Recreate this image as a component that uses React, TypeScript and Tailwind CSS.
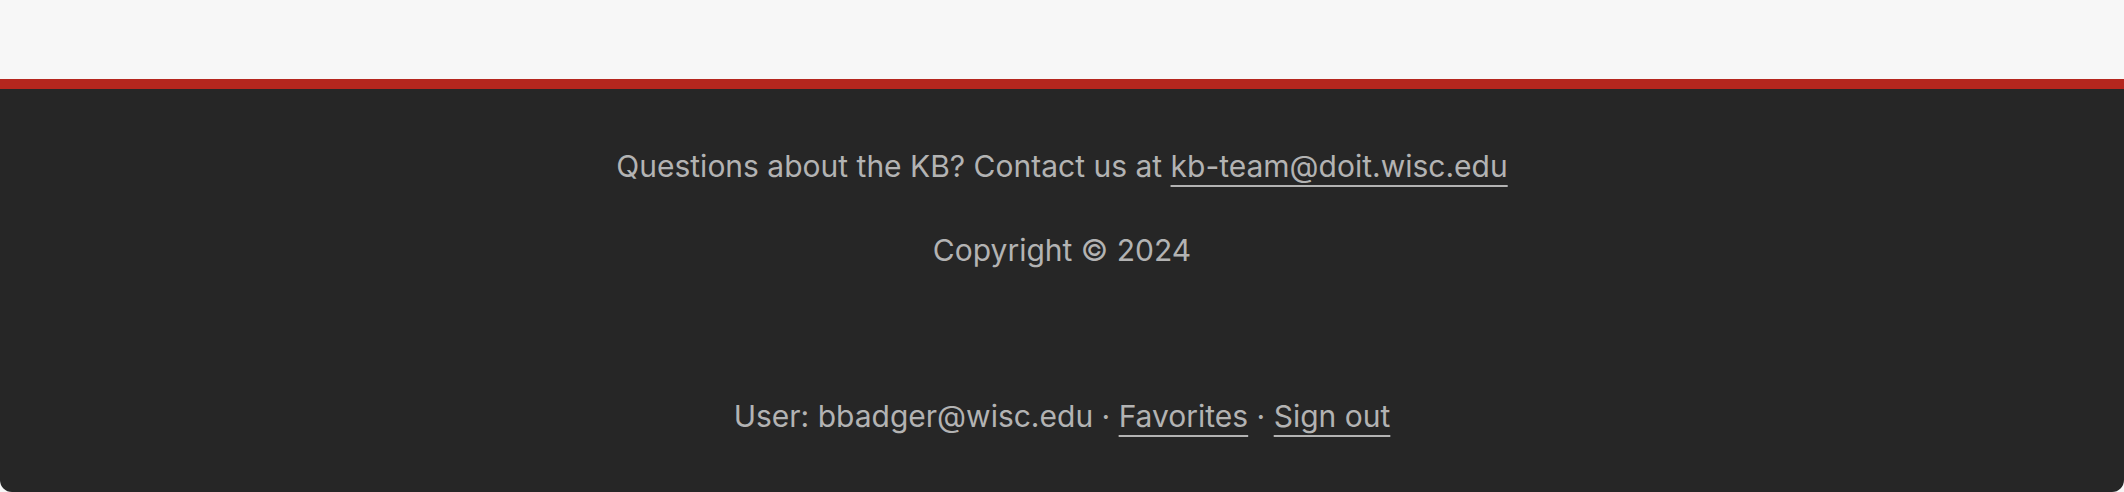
export default function App() {
  return (
    <div className="h-[492px] w-full overflow-hidden bg-[#f7f7f7] flex flex-col font-['Inter',_'Liberation_Sans',_sans-serif]">
      <div className="h-[79px] shrink-0 bg-[#f7f7f7]" />
      <footer className="flex-1 flex flex-col border-t-[10px] border-[#b5261e] bg-[#262626] text-[#b3b3b3] text-[30px] leading-[42px] text-center rounded-b-[12px]">
        <p className="mt-[56px]">
          Questions about the KB? Contact us at{" "}
          <a href="#" className="underline decoration-2 underline-offset-[8px]">
            kb-team@doit.wisc.edu
          </a>
        </p>
        <p className="mt-[42px]">Copyright © 2024</p>
        <p className="mt-[124px]">
          User: bbadger@wisc.edu ·{" "}
          <a href="#" className="underline decoration-2 underline-offset-[8px]">
            Favorites
          </a>{" "}
          ·{" "}
          <a href="#" className="underline decoration-2 underline-offset-[8px]">
            Sign out
          </a>
        </p>
      </footer>
    </div>
  );
}
